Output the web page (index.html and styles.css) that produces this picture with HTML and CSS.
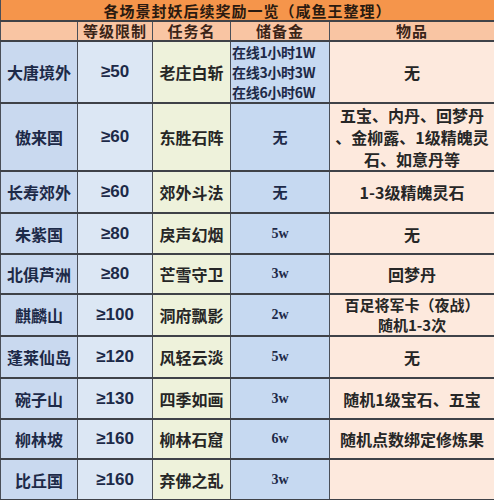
FILE: index.html
```html
<!DOCTYPE html>
<html lang="zh-CN">
<head>
<meta charset="utf-8">
<link rel="stylesheet" href="styles.css">
</head>
<body>
<table class="t">
  <colgroup>
    <col class="c1"><col class="c2"><col class="c3"><col class="c4"><col class="c5">
  </colgroup>
  <tr class="title"><td colspan="5">各场景封妖后续奖励一览（咸鱼王整理）</td></tr>
  <tr class="head"><td></td><td>等级限制</td><td>任务名</td><td>储备金</td><td>物品</td></tr>
  <tr class="r62"><td class="a">大唐境外</td><td class="b">≥50</td><td class="c">老庄白斩</td><td class="d multi">在线1小时1W<br>在线3小时3W<br>在线6小时6W</td><td class="e">无</td></tr>
  <tr class="r68"><td class="a">傲来国</td><td class="b">≥60</td><td class="c">东胜石阵</td><td class="d">无</td><td class="e three">五宝、内丹、回梦丹<br>、金柳露、1级精魄灵<br>石、如意丹等</td></tr>
  <tr class="r42"><td class="a">长寿郊外</td><td class="b">≥60</td><td class="c">郊外斗法</td><td class="d">无</td><td class="e">1-3级精魄灵石</td></tr>
  <tr class="r41"><td class="a">朱紫国</td><td class="b">≥80</td><td class="c">戾声幻烟</td><td class="d sm">5w</td><td class="e">无</td></tr>
  <tr class="r40"><td class="a">北俱芦洲</td><td class="b">≥80</td><td class="c">芒雪守卫</td><td class="d sm">3w</td><td class="e">回梦丹</td></tr>
  <tr class="r41"><td class="a">麒麟山</td><td class="b">≥100</td><td class="c">洞府飘影</td><td class="d sm">2w</td><td class="e two">百足将军卡（夜战）<br>随机1-3次</td></tr>
  <tr class="r42"><td class="a">蓬莱仙岛</td><td class="b">≥120</td><td class="c">风轻云淡</td><td class="d sm">5w</td><td class="e">无</td></tr>
  <tr class="r41"><td class="a">碗子山</td><td class="b">≥130</td><td class="c">四季如画</td><td class="d sm">3w</td><td class="e">随机1级宝石、五宝</td></tr>
  <tr class="r40"><td class="a">柳林坡</td><td class="b">≥160</td><td class="c">柳林石窟</td><td class="d sm">6w</td><td class="e">随机点数绑定修炼果</td></tr>
  <tr class="r41"><td class="a">比丘国</td><td class="b">≥160</td><td class="c">弃佛之乱</td><td class="d sm">3w</td><td class="e"></td></tr>
</table>
</body>
</html>
```
FILE: styles.css
```css
html, body {
  margin: 0;
  padding: 0;
  background: #fbe9de;
}
.t {
  border-collapse: collapse;
  table-layout: fixed;
  width: 494px;
  font-family: "Noto Sans CJK SC", "Liberation Sans", sans-serif;
  font-weight: 700;
  font-size: 16px;
  color: #1d2a48;
}
.c1 { width: 77px; }
.c2 { width: 75px; }
.c3 { width: 78px; }
.c4 { width: 99px; }
.c5 { width: 165px; }
td {
  padding: 0;
  text-align: center;
  vertical-align: middle;
  border-left: 1px solid #4a4f58;
  border-right: 1px solid #4a4f58;
  border-top: 2px solid #3f4248;
  border-bottom: 2px solid #3f4248;
  line-height: 20px;
  white-space: nowrap;
}
.title td {
  height: 17px;
  padding-top: 2px;
  background: #f5954b;
  color: #2a1a10;
  font-size: 15px;
  line-height: 18px;
  border-top: none;
  letter-spacing: 1px;
}
.head td {
  height: 18px;
  background: #f9c5a3;
  color: #3a2418;
  font-size: 15px;
  line-height: 18px;
  letter-spacing: 1px;
}
.r62 td { height: 60px; }
.r68 td { height: 66px; }
.r42 td { height: 40px; }
.r41 td { height: 39px; }
.r40 td { height: 38px; }
.a {
  background: #c9d9ef;
  font-size: 16px;
}
.b {
  background: #dce7f4;
  font-family: "Liberation Sans", Arial, sans-serif;
  font-size: 17px;
}
.c {
  background: #eef2db;
  color: #262626;
  font-size: 16px;
}
.d {
  background: #c6d9f1;
  font-size: 15px;
}
.d.multi {
  font-size: 14px;
  line-height: 20px;
  text-align: left;
  padding-left: 1px;
  letter-spacing: -0.3px;
}
.d.sm {
  font-family: "Liberation Serif", serif;
  font-size: 14px;
}
.e {
  background: #fde9dd;
  color: #262626;
  font-size: 16px;
  line-height: 20px;
}
.e.three {
  line-height: 22px;
}
.e.two {
  font-size: 15px;
  line-height: 20px;
}
```
